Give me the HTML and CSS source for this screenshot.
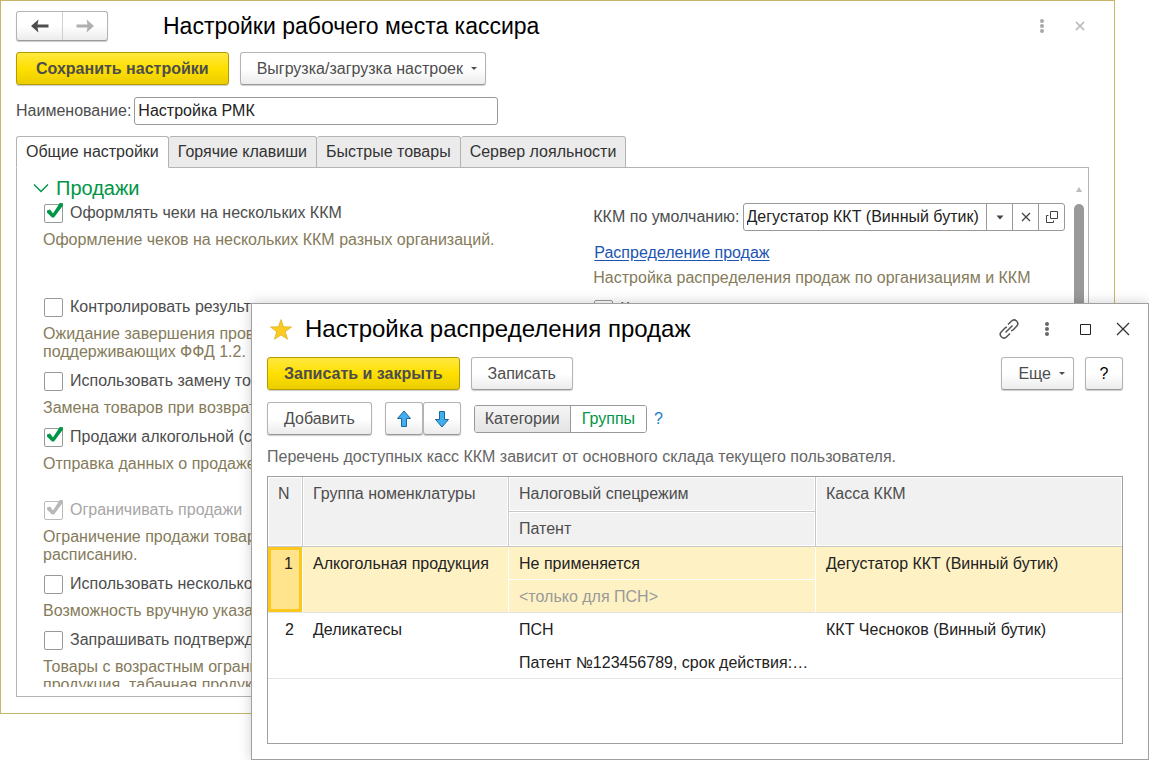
FILE: index.html
```html
<!DOCTYPE html>
<html lang="ru">
<head>
<meta charset="utf-8">
<title>Настройки рабочего места кассира</title>
<link rel="stylesheet" href="styles.css">
</head>
<body>
<div class="desktop">
  <main class="window window-main">
    <header class="titlebar">
      <div class="nav">
        <button class="nav-btn" type="button" aria-label="Назад"><svg width="18" height="14" viewBox="0 0 18 14"><path d="M0 7 7.500 .5 6.500 5.500H17.500v3H6.500l1 5z" fill="#4d4d4d"/></svg></button>
        <button class="nav-btn" type="button" aria-label="Вперед" disabled><svg width="18" height="14" viewBox="0 0 18 14"><path d="M18 7 10.500 .5l1 5H.5v3h11l-1 5z" fill="#b0b0b0"/></svg></button>
      </div>
      <h1 class="title title-main">Настройки рабочего места кассира</h1>
      <div class="tools tools-main">
        <button class="icon-btn" type="button" aria-label="Меню"><svg width="6" height="16" viewBox="0 0 6 16" fill="#a8a8a8"><circle cx="3" cy="3" r="2"/><circle cx="3" cy="8" r="2"/><circle cx="3" cy="13" r="2"/></svg></button>
        <button class="icon-btn" type="button" aria-label="Закрыть"><svg width="10" height="10" viewBox="0 0 10 10"><path d="M1 1l8 8M9 1 1 9" stroke="#b8b8b8" stroke-width="1.700"/></svg></button>
      </div>
    </header>
    <div class="commands">
      <button class="btn btn-primary btn-wide" type="button">Сохранить настройки</button>
      <button class="btn btn-menu" type="button">Выгрузка/загрузка настроек<span class="caret"></span></button>
    </div>
    <div class="name-row">
      <label for="name">Наименование:</label>
      <input class="text-input" id="name" type="text" value="Настройка РМК">
    </div>
    <nav class="tabs" role="tablist">
      <button class="tab tab-active" type="button" role="tab" aria-selected="true">Общие настройки</button>
      <button class="tab" type="button" role="tab">Горячие клавиши</button>
      <button class="tab" type="button" role="tab">Быстрые товары</button>
      <button class="tab" type="button" role="tab">Сервер лояльности</button>
    </nav>
    <section class="panel">
      <div class="scroll">
        <h2 class="section"><svg width="16" height="10" viewBox="0 0 16 10"><path d="M1 1.500 8 8.500l7-7" fill="none" stroke="#009646" stroke-width="1.500"/></svg>Продажи</h2>
        <div class="columns">
          <div class="column">
            <div class="option option-tall">
              <label class="check"><input type="checkbox" checked>Оформлять чеки на нескольких ККМ</label>
              <p class="note">Оформление чеков на нескольких ККМ разных организаций.</p>
            </div>
            <div class="option">
              <label class="check"><input type="checkbox">Контролировать результат</label>
              <p class="note">Ожидание завершения проверки<br>поддерживающих ФФД 1.2.</p>
            </div>
            <div class="option">
              <label class="check"><input type="checkbox">Использовать замену товаров</label>
              <p class="note">Замена товаров при возврате</p>
            </div>
            <div class="option option-spaced">
              <label class="check"><input type="checkbox" checked>Продажи алкогольной (спирт</label>
              <p class="note">Отправка данных о продаже</p>
            </div>
            <div class="option">
              <label class="check check-off"><input type="checkbox" checked disabled>Ограничивать продажи</label>
              <p class="note">Ограничение продажи товаров<br>расписанию.</p>
            </div>
            <div class="option">
              <label class="check"><input type="checkbox">Использовать несколько</label>
              <p class="note">Возможность вручную указать</p>
            </div>
            <div class="option">
              <label class="check"><input type="checkbox">Запрашивать подтвержд</label>
              <p class="note">Товары с возрастным огранич<br>продукция, табачная продукц</p>
            </div>
          </div>
          <div class="column">
            <div class="field">
              <label for="kkm">ККМ по умолчанию:</label>
              <div class="combo">
                <input id="kkm" type="text" value="Дегустатор ККТ (Винный бутик)">
                <button type="button" aria-label="Выбрать"><svg width="8" height="5" viewBox="0 0 8 5"><path d="M.5.5h7L4 4.500z" fill="#444"/></svg></button>
                <button type="button" aria-label="Очистить"><svg width="10" height="10" viewBox="0 0 10 10"><path d="M1 1l8 8M9 1 1 9" stroke="#444" stroke-width="1.300"/></svg></button>
                <button type="button" aria-label="Открыть"><svg width="12" height="12" viewBox="0 0 12 12" fill="none" stroke="#444"><path d="M4.500.5h7v7h-7zM2.500 4.500h-2v7h7v-2"/></svg></button>
              </div>
            </div>
            <a class="link" href="#">Распределение продаж</a>
            <p class="note note-link">Настройка распределения продаж по организациям и ККМ</p>
            <label class="check"><input type="checkbox">Касса</label>
          </div>
        </div>
      </div>
      <div class="scrollbar"><svg width="6" height="5" viewBox="0 0 6 5"><path d="M3 0l3 5H0z" fill="#bbb"/></svg><div class="thumb"></div></div>
    </section>
  </main>

  <section class="window window-dialog" role="dialog" aria-labelledby="dialog-title">
    <header class="titlebar">
      <svg class="star" width="22" height="21" viewBox="0 0 22 21"><path d="M11 0.500 13.500 7.700 21.500 8 15.200 12.800 17.600 20.300 11 15.900 4.400 20.300 6.800 12.800.5 8l8-.3z" fill="#fbcb22" stroke="#d9ab1c" stroke-width=".7"/></svg>
      <h2 class="title title-dialog" id="dialog-title">Настройка распределения продаж</h2>
      <div class="tools tools-dialog">
        <button class="icon-btn" type="button" aria-label="Ссылка"><svg width="20" height="20" viewBox="0 0 20 20" fill="none" stroke="#555" stroke-width="1.500"><path d="M6.500 13.500l7-7M9 5.500l3.300-3.300c1.500-1.500 3.600-1.700 5.200-.2s1.600 3.700.1 5.300L14.500 10.500c-.8.800-1.600 1.200-2.500 1.200M11 14.500l-3.300 3.300c-1.500 1.500-3.600 1.700-5.200.2s-1.600-3.700-.1-5.300L5.500 9.500c.8-.8 1.600-1.200 2.500-1.200"/></svg></button>
        <button class="icon-btn" type="button" aria-label="Меню"><svg width="6" height="16" viewBox="0 0 6 16" fill="#666"><circle cx="3" cy="3" r="2"/><circle cx="3" cy="8" r="2"/><circle cx="3" cy="13" r="2"/></svg></button>
        <button class="icon-btn" type="button" aria-label="Развернуть"><svg width="11" height="11" viewBox="0 0 11 11"><path d="M.5.5h10v10H.5z" fill="none" stroke="#222"/></svg></button>
        <button class="icon-btn" type="button" aria-label="Закрыть"><svg width="14" height="14" viewBox="0 0 14 14"><path d="M1 1l12 12M13 1 1 13" stroke="#333" stroke-width="1.300"/></svg></button>
      </div>
    </header>
    <div class="commands">
      <button class="btn btn-primary" type="button">Записать и закрыть</button>
      <button class="btn" type="button">Записать</button>
      <button class="btn btn-menu push" type="button">Еще<span class="caret"></span></button>
      <button class="btn btn-help" type="button" aria-label="Справка">?</button>
    </div>
    <div class="commands commands-list">
      <button class="btn" type="button">Добавить</button>
      <div class="pair">
        <button class="btn btn-arrow" type="button" aria-label="Вверх"><svg width="16" height="18" viewBox="0 0 16 18"><path d="M8 1l6.500 7.500h-4V16.500h-5V8.500h-4z" fill="#41aef0" stroke="#1c6596"/></svg></button>
        <button class="btn btn-arrow" type="button" aria-label="Вниз"><svg width="16" height="18" viewBox="0 0 16 18"><path d="M8 17 1.500 9.500h4V1.500h5v8h4z" fill="#41aef0" stroke="#1c6596"/></svg></button>
      </div>
      <div class="switch">
        <button class="switch-item" type="button" aria-pressed="false">Категории</button>
        <button class="switch-item switch-on" type="button" aria-pressed="true">Группы</button>
      </div>
      <a class="help" href="#">?</a>
    </div>
    <p class="hint">Перечень доступных касс ККМ зависит от основного склада текущего пользователя.</p>
    <div class="table-box">
      <table class="grid">
        <colgroup><col class="col-n"><col class="col-group"><col class="col-tax"><col></colgroup>
        <thead>
          <tr><th rowspan="2">N</th><th rowspan="2">Группа номенклатуры</th><th>Налоговый спецрежим</th><th rowspan="2">Касса ККМ</th></tr>
          <tr><th>Патент</th></tr>
        </thead>
        <tbody class="record record-selected">
          <tr><td class="num" rowspan="2">1</td><td rowspan="2">Алкогольная продукция</td><td class="upper">Не применяется</td><td rowspan="2">Дегустатор ККТ (Винный бутик)</td></tr>
          <tr><td class="muted">&lt;только для ПСН&gt;</td></tr>
        </tbody>
        <tbody class="record">
          <tr><td class="num" rowspan="2">2</td><td rowspan="2">Деликатесы</td><td class="upper">ПСН</td><td rowspan="2">ККТ Чесноков (Винный бутик)</td></tr>
          <tr><td>Патент №123456789, срок действия:…</td></tr>
        </tbody>
      </table>
    </div>
  </section>
</div>
</body>
</html>
```
FILE: styles.css
```css
* { box-sizing: border-box; }

body {
  margin: 0;
  background: #fff;
  color: #4d4d4d;
  font-family: "Liberation Sans", Arial, sans-serif;
  font-size: 16px;
  line-height: 18px;
}

button, input { font: inherit; color: inherit; }
button { cursor: pointer; }
h1, h2, p { margin: 0; font-weight: normal; }
svg { display: block; flex: none; }

.desktop { position: relative; height: 100vh; min-height: 640px; overflow: hidden; }

.window { position: absolute; display: flex; flex-direction: column; background: #fff; }
.window-main { inset: 0 34px 46px 0; padding: 10px 25px 16px 15px; border: 1px solid #c8b568; }
.window-dialog {
  inset: 303px 0 0 251px;
  padding: 8px 25px 15px 15px;
  border: 1px solid #a0a0a0;
  box-shadow: 0 0 12px rgba(0, 0, 0, .2);
}

/* Title bars */
.titlebar { display: flex; align-items: center; }
.title { color: #000; white-space: nowrap; }
.title-main { margin-left: 55px; font-size: 23px; line-height: 30px; }
.title-dialog { margin-left: 13px; font-size: 24px; line-height: 34px; }
.star { margin-left: 3px; }
.nav { display: flex; border: 1px solid #b3b3b3; border-bottom-color: #999; border-radius: 3px; background: linear-gradient(#fff 50%, #ececec); box-shadow: 0 1px 1px #ccc; }
.nav-btn { display: flex; align-items: center; justify-content: center; width: 45px; height: 28px; padding: 0; border: 0; background: none; }
.nav-btn + .nav-btn { border-left: 1px solid #d0d0d0; }
.tools { display: flex; align-items: center; margin-left: auto; }
.tools-main { margin-right: -10px; }
.tools-dialog { margin-right: -19px; }
.icon-btn { display: flex; align-items: center; justify-content: center; width: 38px; height: 28px; padding: 0; border: 0; background: none; }

/* Buttons */
.commands { display: flex; align-items: center; gap: 11px; margin-top: 11px; }
.commands-list { margin-top: 12px; gap: 13px; }
.btn {
  display: flex;
  align-items: center;
  justify-content: center;
  height: 33px;
  padding: 0 16px;
  border: 1px solid #b3b3b3;
  border-bottom-color: #999;
  border-radius: 3px;
  background: linear-gradient(#fff 50%, #ececec);
  box-shadow: 0 1px 1px #ccc;
  white-space: nowrap;
}
.btn-primary { border-color: #b39b00; background: linear-gradient(#ffe840, #ffe000 50%, #ebcd00); font-weight: bold; }
.btn-wide { padding: 0 19px; }
.btn-menu { padding-right: 8px; gap: 8px; }
.btn-help { width: 38px; padding: 0; color: #000; }
.btn-arrow { width: 38px; padding: 0; }
.caret { border: 3px solid transparent; border-top-color: #4d4d4d; border-bottom-width: 0; }
.push { margin-left: auto; }
.pair { display: flex; }
.switch { display: flex; height: 28px; border: 1px solid #999; border-radius: 3px; overflow: hidden; }
.switch-item { padding: 0 10px; border: 0; background: linear-gradient(#f5f5f5, #e4e4e4); }
.switch-on { padding: 0 11px; border-left: 1px solid #999; background: #fff; color: #009646; }
.help { margin-left: -6px; color: #1a7dc4; text-decoration: none; }

/* Name field and tabs */
.name-row { display: flex; align-items: center; gap: 3px; margin-top: 12px; }
.text-input { width: 364px; height: 28px; padding: 0 3px; border: 1px solid #999; border-radius: 3px; color: #222; }
.tabs { display: flex; position: relative; z-index: 1; margin-top: 11px; }
.tab { height: 32px; margin-bottom: -1px; padding: 0 9px; border: 1px solid #b3b3b3; border-left-width: 0; border-radius: 3px 3px 0 0; background: #ebebeb; color: #333; }
.tab-active { border-left-width: 1px; border-bottom-color: #fff; background: #fff; }

/* Settings panel */
.panel { display: flex; flex: 1; min-height: 0; padding: 8px 4px 9px 16px; border: 1px solid #b3b3b3; }
.scroll { flex: 1; min-width: 0; overflow: hidden; }
.section { display: flex; align-items: center; gap: 7px; color: #009646; font-size: 20px; line-height: 24px; }
.columns { display: grid; grid-template-columns: minmax(0, 7fr) minmax(0, 6fr); padding: 3px 0 0 10px; }
.column { min-width: 0; }
.option { margin-bottom: 10px; }
.option-tall { margin-bottom: 48px; }
.option-spaced { margin-bottom: 27px; }
.check { display: flex; align-items: center; gap: 7px; height: 20px; white-space: nowrap; }
.check-off { color: #a6a6a6; }
.check input { position: relative; flex: none; width: 19px; height: 19px; margin: 0 0 0 1px; appearance: none; border: 1px solid #999; border-radius: 2px; background: #fff; }
.check input:checked::before {
  content: "";
  position: absolute;
  inset: -2px -1px 0 -1px;
  background: #009646;
  clip-path: polygon(3px 8px, 6px 7px, 9px 11px, 16px 0, 19px 1px, 19px 3px, 10px 15px, 8px 15px, 3px 10px);
}
.check input:disabled { border-color: #bbb; }
.check input:disabled::before { background: #b8b8b8; }
.note { margin-top: 8px; color: #857b5a; white-space: nowrap; }
.note-link { margin: 7px 0 12px; }
.field { display: flex; align-items: center; gap: 3px; margin-bottom: 13px; }
.combo { display: flex; flex: 1; min-width: 0; height: 28px; border: 1px solid #999; border-radius: 3px; }
.combo input { flex: 1; min-width: 0; padding: 0 3px; border: 0; background: none; color: #222; }
.combo button { display: flex; align-items: center; justify-content: center; width: 26px; padding: 0; border: 0; border-left: 1px solid #999; background: none; }
.link { display: inline-block; margin-left: 1px; color: #1c54b2; text-underline-offset: 2px; }
.scrollbar { display: flex; flex-direction: column; align-items: center; width: 10px; margin-left: 9px; padding-top: 11px; }
.thumb { flex: none; width: 10px; height: 60%; margin-top: 12px; border-radius: 5px; background: #999; }

/* Distribution table */
.hint { margin-top: 13px; color: #666; }
.table-box { flex: 1; min-height: 0; margin-top: 10px; border: 1px solid #a0a0a0; overflow: hidden; }
.grid { width: 100%; border-spacing: 0; table-layout: fixed; }
.col-n { width: 35px; }
.col-group { width: 206px; }
.col-tax { width: 307px; }
.grid th, .grid td { padding: 8px 10px 6px; text-align: left; vertical-align: top; font-weight: normal; white-space: nowrap; }
.grid th { height: 35px; border: solid #c8c8c8; border-width: 0 1px 1px 0; background: #f1f1f1; box-shadow: inset 0 0 0 1px #fff; }
.grid th:last-child[rowspan] { border-right: 0; }
.grid td { height: 33px; border-bottom: 1px solid #e4e4e4; color: #222; }
.grid td.upper { border-bottom-color: #fff; }
.grid td.num { padding-right: 9px; text-align: right; }
.record-selected td { border-right: 1px solid #fff; background: #fef1c4; }
.record-selected td:last-child[rowspan] { border-right: 0; }
.record-selected td.num { background: #ffe48d; box-shadow: inset 0 0 0 3px #fbc91e; }
.grid td.muted { color: #999; }
```
